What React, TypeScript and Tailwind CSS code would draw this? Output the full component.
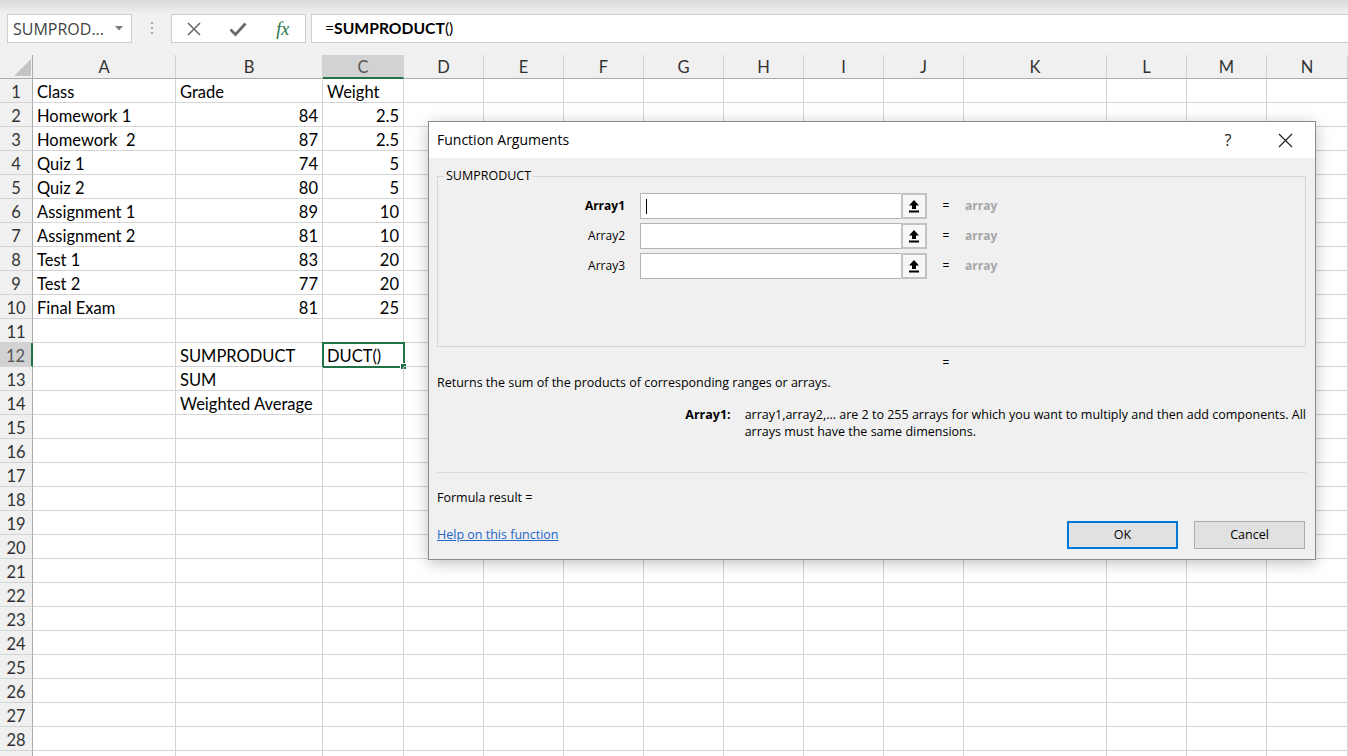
import React from 'react';
import clsx from 'clsx';

const COLS = ['A', 'B', 'C', 'D', 'E', 'F', 'G', 'H', 'I', 'J', 'K', 'L', 'M', 'N'];

const sheet: Record<number, { a?: string; b?: string; c?: string }> = {
  1: { a: 'Class', b: 'Grade', c: 'Weight' },
  2: { a: 'Homework 1', b: '84', c: '2.5' },
  3: { a: 'Homework  2', b: '87', c: '2.5' },
  4: { a: 'Quiz 1', b: '74', c: '5' },
  5: { a: 'Quiz 2', b: '80', c: '5' },
  6: { a: 'Assignment 1', b: '89', c: '10' },
  7: { a: 'Assignment 2', b: '81', c: '10' },
  8: { a: 'Test 1', b: '83', c: '20' },
  9: { a: 'Test 2', b: '77', c: '20' },
  10: { a: 'Final Exam', b: '81', c: '25' },
  12: { b: 'SUMPRODUCT', c: 'DUCT()' },
  13: { b: 'SUM' },
  14: { b: 'Weighted Average' },
};

const isNum = (v?: string) => !!v && /^[\d.]+$/.test(v);

const RefIcon = () => (
  <svg width="12" height="14" viewBox="0 0 12 14">
    <polygon points="6,1 11,6.5 8,6.5 8,10 4,10 4,6.5 1,6.5" fill="#000" />
    <rect x="1" y="11.5" width="10" height="2" fill="#000" />
  </svg>
);

const ArgRow = ({ label, bold, cursor }: { label: string; bold?: boolean; cursor?: boolean }) => (
  <div className="flex items-center h-[26px] mb-[4px]">
    <div className={clsx('w-[187px] text-right text-[12px] text-black', bold && 'font-bold')}>{label}</div>
    <div className="ml-[15px] w-[287px] h-[26px] bg-white border border-[#b4b4b4] flex items-center">
      <div className="flex-1 pl-[5px]">
        {cursor && <div className="w-px h-[15px] bg-black" />}
      </div>
      <div className="w-[26px] h-[26px] -mr-px border-2 border-[#c3c3c3] bg-[#f7f7f7] flex items-center justify-center">
        <RefIcon />
      </div>
    </div>
    <div className="ml-[13px] w-[12px] text-center text-[12px] text-black">=</div>
    <div className="ml-[13px] text-[12px] font-bold text-[#a6a6a6]">array</div>
  </div>
);

export default function App() {
  return (
    <div className="relative w-[1348px] h-[756px] overflow-hidden bg-white font-['Lato',sans-serif] text-black">
      {/* chrome: formula bar */}
      <div className="bg-[#f1f1f1]">
        <div className="h-[13px] bg-gradient-to-b from-[#d9d9d9] to-[#efefef]" />
        <div className="h-[30px] flex items-start">
          <div className="ml-[7px] mt-px w-[125px] h-[29px] bg-white border border-[#cdcdcd] flex items-center pl-[5px] pr-[8px] font-['Open_Sans',sans-serif] text-[16px] text-[#444]">
            <span className="flex-1 leading-none">SUMPROD...</span>
            <svg width="8" height="5" viewBox="0 0 8 5">
              <polygon points="0,0 8,0 4,4.5" fill="#7a7a7a" />
            </svg>
          </div>
          <div className="w-[39px] h-[30px] flex flex-col items-center justify-center gap-[3px]">
            <div className="w-[2px] h-[2px] bg-[#a6a6a6]" />
            <div className="w-[2px] h-[2px] bg-[#a6a6a6]" />
            <div className="w-[2px] h-[2px] bg-[#a6a6a6]" />
          </div>
          <div className="mt-px w-[135px] h-[29px] bg-white border border-[#cdcdcd] flex">
            <div className="w-[45px] flex items-center justify-center">
              <svg width="16" height="16" viewBox="0 0 16 16">
                <path d="M2 2 L14 14 M14 2 L2 14" stroke="#6a6a6a" strokeWidth="1.6" />
              </svg>
            </div>
            <div className="w-[45px] flex items-center justify-center">
              <svg width="18" height="16" viewBox="0 0 18 16">
                <path d="M1.5 8.5 L6.5 13.5 L16.5 2.5" stroke="#6a6a6a" strokeWidth="2.8" fill="none" />
              </svg>
            </div>
            <div className="w-[45px] flex items-center justify-center font-['Liberation_Serif',serif] italic text-[18px] text-[#217346] leading-none">
              fx
            </div>
          </div>
          <div className="ml-[5px] mt-px flex-1 h-[29px] bg-white border border-[#cdcdcd] border-r-0 flex items-center pl-[13px] text-[15.7px]">
            =<span className="font-bold">SUMPRODUCT</span>()
          </div>
        </div>
        <div className="h-[12px]" />
      </div>

      {/* grid */}
      <div className="grid grid-cols-[33px_143px_147px_81px_80px_80px_80px_80px_80px_80px_80px_143px_80px_80px_81px] auto-rows-[24px] text-[16.5px]">
        <div className="relative bg-[#f0f0f0] border-r border-b border-[#ababab]">
          <svg className="absolute left-[14px] top-[4px]" width="17" height="17" viewBox="0 0 17 17">
            <polygon points="17,0 17,17 0,17" fill="#c4c4c4" />
          </svg>
        </div>
        {COLS.map((c) => (
          <div
            key={c}
            className={clsx(
              'flex items-center justify-center pt-[2px] border-r border-[#d0d0d0] leading-none',
              c === 'C'
                ? 'bg-[#d2d2d2] border-b-2 border-b-[#217346] text-[#555]'
                : 'bg-[#f0f0f0] border-b border-b-[#ababab] text-[#333]'
            )}
          >
            {c}
          </div>
        ))}
        {Array.from({ length: 29 }, (_, i) => i + 1).map((r) => {
          const d = sheet[r] ?? {};
          return (
            <React.Fragment key={r}>
              <div
                className={clsx(
                  'flex items-center justify-center pt-[3px] border-b border-[#d4d4d4] leading-none',
                  r === 12
                    ? 'bg-[#d2d2d2] border-r-2 border-r-[#217346] text-[#555]'
                    : 'bg-[#f0f0f0] border-r border-r-[#ababab] text-[#333]'
                )}
              >
                {r < 29 ? r : ''}
              </div>
              {COLS.map((col) => {
                const v = col === 'A' ? d.a : col === 'B' ? d.b : col === 'C' ? d.c : undefined;
                const selected = r === 12 && col === 'C';
                return (
                  <div
                    key={col}
                    className={clsx(
                      'relative flex items-center pt-[3px] border-r border-b border-[#d4d4d4] px-[4px] leading-none whitespace-pre',
                      isNum(v) ? 'justify-end' : 'justify-start'
                    )}
                  >
                    {v}
                    {selected && (
                      <>
                        <div className="absolute left-[-1px] top-[-1px] w-[83px] h-[26px] border-2 border-[#217346]" />
                        <div className="absolute right-[-4px] bottom-[-4px] w-[7px] h-[7px] bg-[#217346] border border-white" />
                      </>
                    )}
                  </div>
                );
              })}
            </React.Fragment>
          );
        })}
      </div>

      {/* Function Arguments dialog */}
      <div className="absolute left-[428px] top-[121px] w-[888px] h-[439px] border border-[#8a8a8a] bg-[#f0f0f0] shadow-[0_3px_14px_rgba(0,0,0,0.25)] flex flex-col font-['Open_Sans',sans-serif] text-black">
        <div className="h-[36px] shrink-0 bg-white flex items-center pl-[8px]">
          <span className="text-[14px] leading-none">Function Arguments</span>
          <div className="ml-auto flex items-center">
            <div className="w-[30px] mr-[19px] text-center text-[16px] text-[#222]">?</div>
            <div className="w-[46px] mr-[7px] flex justify-center">
              <svg width="15" height="15" viewBox="0 0 15 15">
                <path d="M1 1 L14 14 M14 1 L1 14" stroke="#222" strokeWidth="1.2" />
              </svg>
            </div>
          </div>
        </div>

        <div className="flex-1 pl-[8px] pr-[9px] flex flex-col text-[12.5px]">
          <fieldset className="mt-[10px] border border-[#d5d5d5] pt-[9px] pb-[63px]">
            <legend className="ml-[6px] px-[2px] leading-[16px]">SUMPRODUCT</legend>
            <ArgRow label="Array1" bold cursor />
            <ArgRow label="Array2" />
            <ArgRow label="Array3" />
          </fieldset>

          <div className="mt-[8px] h-[16px] flex">
            <div className="ml-[503px] w-[12px] text-center text-[12px] leading-[16px]">=</div>
          </div>

          <div className="mt-[4px] leading-[16px]">
            Returns the sum of the products of corresponding ranges or arrays.
          </div>

          <div className="mt-[15px] flex leading-[17px]">
            <div className="w-[294px] text-right font-bold">Array1:</div>
            <div className="ml-[14px] whitespace-nowrap">
              array1,array2,... are 2 to 255 arrays for which you want to multiply and then add components. All
              <br />
              arrays must have the same dimensions.
            </div>
          </div>

          <div className="mt-[32px] h-px bg-[#dadada]" />

          <div className="mt-[17px] leading-[16px]">Formula result =</div>

          <div className="mt-[15px] h-[28px] flex items-center">
            <span className="text-[#2266c6] underline mt-px">Help on this function</span>
            <div className="ml-auto mr-px flex gap-[16px]">
              <div className="w-[111px] h-[28px] bg-[#e1e1e1] border-2 border-[#0078d7] flex items-center justify-center">
                OK
              </div>
              <div className="w-[111px] h-[28px] bg-[#e1e1e1] border border-[#adadad] flex items-center justify-center">
                Cancel
              </div>
            </div>
          </div>
        </div>
      </div>
    </div>
  );
}
